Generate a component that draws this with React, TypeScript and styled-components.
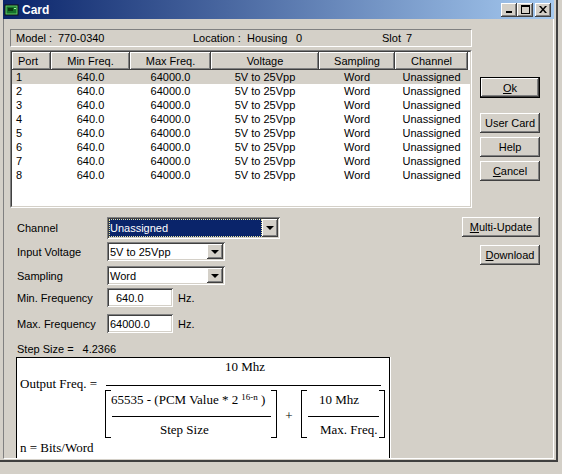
import styled, { createGlobalStyle } from 'styled-components';

const GlobalStyle = createGlobalStyle`
  html, body {
    margin: 0;
    padding: 0;
    background: #d4d0c8;
  }
  body {
    width: 562px;
    height: 474px;
    overflow: hidden;
    font-family: "Liberation Sans", Arial, sans-serif;
    font-size: 11px;
    color: #000;
  }
`;

const raised =
  'inset -1px -1px #404040, inset 1px 1px #ffffff, inset -2px -2px #808080, inset 2px 2px #d4d0c8';
const sunken =
  'inset 1px 1px #808080, inset -1px -1px #ffffff, inset 2px 2px #404040, inset -2px -2px #d4d0c8';

const COLS = '39px 79px 81px 108px 76px 73px';

const columns = [
  { title: 'Port', left: true },
  { title: 'Min Freq.' },
  { title: 'Max Freq.' },
  { title: 'Voltage' },
  { title: 'Sampling' },
  { title: 'Channel' },
];

const ports = [1, 2, 3, 4, 5, 6, 7, 8];

function App() {
  return (
    <>
      <GlobalStyle />
      <Window>
        <TitleBar>
          <TitleIcon width="16" height="14" viewBox="0 0 16 14">
            <rect x="0.5" y="1.5" width="14" height="11" fill="#101010" />
            <rect x="2" y="3" width="11" height="8" fill="#17702a" stroke="#5fd06a" strokeWidth="1" />
            <rect x="4" y="5" width="5" height="3" fill="#0b3a12" />
            <rect x="10" y="5" width="2" height="1" fill="#a8f0a0" />
          </TitleIcon>
          <TitleText>Card</TitleText>
          <TitleButtons>
            <TitleButton>
              <svg width="8" height="7" viewBox="0 0 8 7">
                <rect x="1" y="5" width="6" height="2" fill="#000" />
              </svg>
            </TitleButton>
            <TitleButton>
              <svg width="9" height="9" viewBox="0 0 9 9">
                <rect x="0.5" y="0.5" width="8" height="8" fill="none" stroke="#000" />
                <rect x="0" y="0" width="9" height="2" fill="#000" />
              </svg>
            </TitleButton>
            <TitleButton $gap>
              <svg width="8" height="7" viewBox="0 0 8 7">
                <path d="M0 0 L2 0 L4 2.5 L6 0 L8 0 L5 3.5 L8 7 L6 7 L4 4.5 L2 7 L0 7 L3 3.5 Z" fill="#000" />
              </svg>
            </TitleButton>
          </TitleButtons>
        </TitleBar>

        <Client>
          <TopSection>
            <LeftCol>
              <InfoPanel>
                <span>Model :</span>
                <span>770-0340</span>
                <span>Location :</span>
                <span>Housing</span>
                <span>0</span>
                <span>Slot</span>
                <span>7</span>
              </InfoPanel>
              <ListOuter>
                <ListInner>
                  <ListHeader>
                    {columns.map((c) => (
                      <HeaderCell key={c.title} $left={c.left}>
                        {c.title}
                      </HeaderCell>
                    ))}
                  </ListHeader>
                  {ports.map((p) => (
                    <ListRow key={p} $selected={p === 1}>
                      <Cell $left>{p}</Cell>
                      <Cell>640.0</Cell>
                      <Cell>64000.0</Cell>
                      <Cell>5V to 25Vpp</Cell>
                      <Cell>Word</Cell>
                      <Cell>Unassigned</Cell>
                    </ListRow>
                  ))}
                </ListInner>
              </ListOuter>
            </LeftCol>
            <RightCol>
              <Button $default $mt={48}>
                <u>O</u>k
              </Button>
              <Button $mt={15}>User Card</Button>
              <Button $mt={4}>Help</Button>
              <Button $mt={4}>
                <u>C</u>ancel
              </Button>
            </RightCol>
          </TopSection>

          <BottomSection>
            <Form>
              <FormRow $h={22} $mt={0}>
                <Label>Channel</Label>
                <Combo $w={173}>
                  <ComboValue $focused>Unassigned</ComboValue>
                  <ComboArrow>
                    <Triangle />
                  </ComboArrow>
                </Combo>
              </FormRow>
              <FormRow $h={19} $mt={3}>
                <Label>Input Voltage</Label>
                <Combo $w={118}>
                  <ComboValue>5V to 25Vpp</ComboValue>
                  <ComboArrow>
                    <Triangle />
                  </ComboArrow>
                </Combo>
              </FormRow>
              <FormRow $h={19} $mt={5}>
                <Label>Sampling</Label>
                <Combo $w={118}>
                  <ComboValue>Word</ComboValue>
                  <ComboArrow>
                    <Triangle />
                  </ComboArrow>
                </Combo>
              </FormRow>
              <FormRow $h={19} $mt={3}>
                <Label>Min. Frequency</Label>
                <TextBox $pad={7}>640.0</TextBox>
                <Unit>Hz.</Unit>
              </FormRow>
              <FormRow $h={19} $mt={7}>
                <Label>Max. Frequency</Label>
                <TextBox $pad={1}>64000.0</TextBox>
                <Unit>Hz.</Unit>
              </FormRow>
              <StepSize>
                <span>Step Size =</span>
                <StepValue>4.2366</StepValue>
              </StepSize>
            </Form>
            <SideButtons>
              <Button $w={78}>
                <u>M</u>ulti-Update
              </Button>
              <Button $mt={8}>
                <u>D</u>ownload
              </Button>
            </SideButtons>
          </BottomSection>

          <FormulaBox>
            <FormulaRow>
              <OutLabel>Output Freq. =</OutLabel>
              <MainFraction>
                <MainNumer>10 Mhz</MainNumer>
                <MainLine />
                <Denominator>
                  <Bracket $side="left" />
                  <InnerFraction $w={160}>
                    <InnerText $indent={0}>
                      65535 - (PCM Value * 2<Sup>16-n</Sup> )
                    </InnerText>
                    <InnerLine />
                    <InnerText $indent={49}>Step Size</InnerText>
                  </InnerFraction>
                  <Bracket $side="right" />
                  <Plus>+</Plus>
                  <Bracket $side="left" />
                  <InnerFraction $w={72}>
                    <InnerText $indent={12}>10 Mhz</InnerText>
                    <InnerLine />
                    <InnerText $indent={13}>Max. Freq.</InnerText>
                  </InnerFraction>
                  <Bracket $side="right" />
                </Denominator>
              </MainFraction>
            </FormulaRow>
            <Note>n = Bits/Word</Note>
          </FormulaBox>
        </Client>
      </Window>
    </>
  );
}

export default App;

const Window = styled.div`
  width: 558px;
  height: 462px;
  box-sizing: border-box;
  display: flex;
  flex-direction: column;
  overflow: hidden;
  padding: 0 2px 1px 3px;
  background: #d4d0c8;
  border-right: 2px solid #404040;
  border-bottom: 2px solid #404040;
`;

const TitleBar = styled.div`
  display: flex;
  align-items: center;
  flex-shrink: 0;
  height: 19px;
  padding: 0 3px 0 1px;
  background: linear-gradient(to right, #0a246a, #a6caf0);
`;

const TitleIcon = styled.svg`
  flex-shrink: 0;
`;

const TitleText = styled.span`
  margin-left: 2px;
  color: #fff;
  font-size: 12px;
  font-weight: bold;
`;

const TitleButtons = styled.div`
  display: flex;
  margin-left: auto;
`;

const TitleButton = styled.div<{ $gap?: boolean }>`
  display: flex;
  align-items: center;
  justify-content: center;
  width: 16px;
  height: 14px;
  margin-left: ${({ $gap }) => ($gap ? '2px' : '0')};
  background: #d4d0c8;
  box-shadow: ${raised};
`;

const Client = styled.div`
  flex: 1;
  display: flex;
  flex-direction: column;
  overflow: hidden;
  padding: 10px 0 0 6px;
  border-left: 1px solid #808080;
  border-right: 1px solid #fff;
  border-bottom: 1px solid #fff;
`;

const TopSection = styled.div`
  display: flex;
  gap: 8px;
  width: 530px;
  flex-shrink: 0;
`;

const LeftCol = styled.div`
  display: flex;
  flex-direction: column;
  width: 462px;
`;

const InfoPanel = styled.div`
  display: grid;
  grid-template-columns: 42px 135px 54px 49px 86px 24px auto;
  align-items: center;
  height: 18px;
  box-sizing: border-box;
  padding-left: 5px;
  border: 1px solid;
  border-color: #808080 #fff #fff #808080;
  white-space: nowrap;
`;

const ListOuter = styled.div`
  display: flex;
  height: 158px;
  margin-top: 3px;
  box-sizing: border-box;
  border: 1px solid;
  border-color: #808080 #fff #fff #808080;
`;

const ListInner = styled.div`
  flex: 1;
  overflow: hidden;
  background: #fff;
  border: 1px solid;
  border-color: #404040 #d4d0c8 #d4d0c8 #404040;
`;

const ListHeader = styled.div`
  display: grid;
  grid-template-columns: ${COLS};
  height: 18px;
`;

const HeaderCell = styled.div<{ $left?: boolean }>`
  display: flex;
  align-items: center;
  justify-content: ${({ $left }) => ($left ? 'flex-start' : 'center')};
  padding-left: ${({ $left }) => ($left ? '6px' : '0')};
  background: #d4d0c8;
  box-shadow: ${raised};
`;

const ListRow = styled.div<{ $selected?: boolean }>`
  display: grid;
  grid-template-columns: ${COLS};
  height: 14px;
  line-height: 14px;
  background: ${({ $selected }) => ($selected ? '#d4d0c8' : 'transparent')};
`;

const Cell = styled.div<{ $left?: boolean }>`
  text-align: ${({ $left }) => ($left ? 'left' : 'center')};
  padding-left: ${({ $left }) => ($left ? '4px' : '0')};
  white-space: nowrap;
`;

const RightCol = styled.div`
  display: flex;
  flex-direction: column;
  width: 60px;
`;

const Button = styled.div<{ $default?: boolean; $mt?: number; $w?: number }>`
  display: flex;
  align-items: center;
  justify-content: center;
  box-sizing: border-box;
  width: ${({ $w }) => $w ?? 60}px;
  height: ${({ $default }) => ($default ? 21 : 20)}px;
  margin-top: ${({ $mt }) => $mt ?? 0}px;
  background: #d4d0c8;
  border: ${({ $default }) => ($default ? '1px solid #000' : 'none')};
  box-shadow: ${raised};
  white-space: nowrap;
`;

const BottomSection = styled.div`
  display: flex;
  justify-content: space-between;
  width: 530px;
  margin-top: 9px;
  flex-shrink: 0;
`;

const Form = styled.div`
  display: flex;
  flex-direction: column;
  padding-left: 7px;
`;

const FormRow = styled.div<{ $h: number; $mt: number }>`
  display: flex;
  align-items: center;
  height: ${({ $h }) => $h}px;
  margin-top: ${({ $mt }) => $mt}px;
`;

const Label = styled.span`
  width: 90px;
  flex-shrink: 0;
  white-space: nowrap;
`;

const Combo = styled.div<{ $w: number }>`
  display: flex;
  box-sizing: border-box;
  width: ${({ $w }) => $w}px;
  height: 100%;
  padding: 2px;
  background: #fff;
  box-shadow: ${sunken};
`;

const ComboValue = styled.div<{ $focused?: boolean }>`
  flex: 1;
  display: flex;
  align-items: center;
  padding-left: 1px;
  background: ${({ $focused }) => ($focused ? '#0a246a' : 'transparent')};
  color: ${({ $focused }) => ($focused ? '#fff' : '#000')};
  outline: ${({ $focused }) => ($focused ? '1px dotted #e8e4a0' : 'none')};
  outline-offset: -1px;
  white-space: nowrap;
`;

const ComboArrow = styled.div`
  display: flex;
  align-items: center;
  justify-content: center;
  width: 16px;
  background: #d4d0c8;
  box-shadow: ${raised};
`;

const Triangle = styled.span`
  width: 0;
  height: 0;
  border-left: 4px solid transparent;
  border-right: 4px solid transparent;
  border-top: 4px solid #000;
`;

const TextBox = styled.div<{ $pad: number }>`
  display: flex;
  align-items: center;
  box-sizing: border-box;
  width: 66px;
  height: 100%;
  padding: 2px 2px 2px ${({ $pad }) => $pad + 2}px;
  background: #fff;
  box-shadow: ${sunken};
`;

const Unit = styled.span`
  margin-left: 5px;
`;

const StepSize = styled.div`
  display: flex;
  margin-top: 9px;
  line-height: 14px;
`;

const StepValue = styled.span`
  margin-left: 9px;
`;

const SideButtons = styled.div`
  display: flex;
  flex-direction: column;
  align-items: flex-end;
`;

const FormulaBox = styled.div`
  flex-shrink: 0;
  width: 374px;
  height: 120px;
  box-sizing: border-box;
  margin: 1px 0 0 6px;
  padding-top: 1px;
  background: #fff;
  border: 1px solid #000;
  box-shadow: 1px 0 0 #fff;
  font-family: "Liberation Serif", "Times New Roman", serif;
  font-size: 13px;
  line-height: 15px;
`;

const FormulaRow = styled.div`
  display: flex;
  align-items: flex-start;
`;

const OutLabel = styled.span`
  width: 85px;
  flex-shrink: 0;
  margin: 17px 0 0 3px;
  white-space: nowrap;
`;

const MainFraction = styled.div`
  display: flex;
  flex-direction: column;
`;

const MainNumer = styled.div`
  height: 15px;
  margin-bottom: 11px;
  text-align: center;
`;

const MainLine = styled.div`
  height: 1px;
  margin: 0 4px 0 1px;
  background: #000;
`;

const Denominator = styled.div`
  display: flex;
  align-items: flex-start;
  margin-top: 4px;
`;

const Bracket = styled.div<{ $side: 'left' | 'right' }>`
  flex-shrink: 0;
  width: 6px;
  height: 48px;
  box-sizing: border-box;
  border: 1px solid #000;
  ${({ $side }) => ($side === 'left' ? 'border-right: none;' : 'border-left: none;')}
`;

const InnerFraction = styled.div<{ $w: number }>`
  display: flex;
  flex-direction: column;
  flex-shrink: 0;
  width: ${({ $w }) => $w}px;
  height: 48px;
  padding-top: 2px;
  box-sizing: border-box;
`;

const InnerText = styled.div<{ $indent: number }>`
  height: 15px;
  padding-left: ${({ $indent }) => $indent}px;
  white-space: nowrap;
`;

const InnerLine = styled.div`
  height: 1px;
  margin: 9px 0 5px 1px;
  background: #000;
`;

const Sup = styled.sup`
  margin-left: 3px;
  font-size: 9px;
  line-height: 0;
  vertical-align: 4px;
`;

const Plus = styled.div`
  width: 24px;
  flex-shrink: 0;
  padding-top: 18px;
  text-align: center;
`;

const Note = styled.div`
  margin: 2px 0 0 3px;
`;
